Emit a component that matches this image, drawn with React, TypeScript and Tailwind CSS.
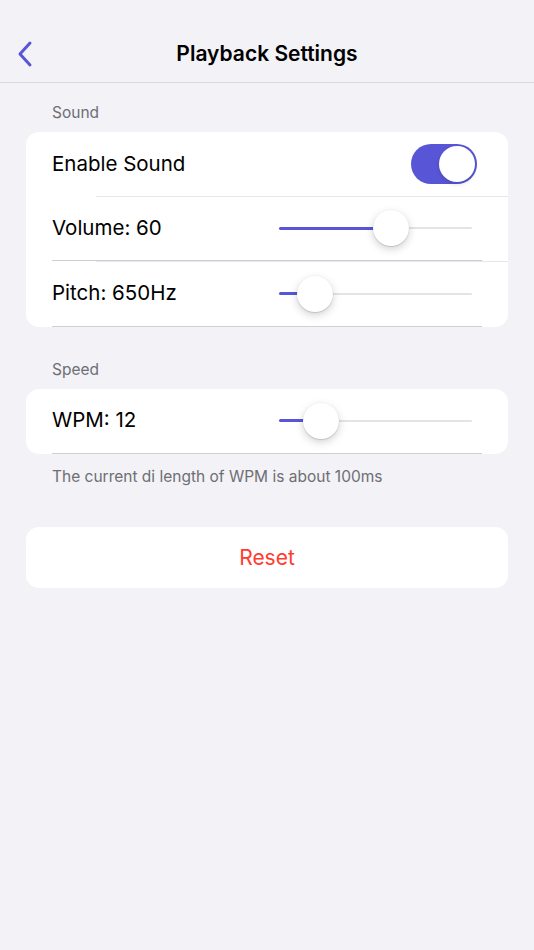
import React from "react";

const font = { fontFamily: "Inter, 'Noto Sans', sans-serif" };

function Slider({ pct }: { pct: number }) {
  const center = 18 + 157 * pct;
  return (
    <div className="relative w-[193px] h-[40px] ml-auto mr-[36px] flex items-center">
      <div className="w-full h-[2px] rounded-full bg-[#e3e3e8] flex">
        <div className="h-[3px] -mt-[0.5px] rounded-full bg-[#5856d6]" style={{ width: center }} />
      </div>
      <div
        className="absolute top-[2px] w-[36px] h-[36px] rounded-full bg-white shadow-[0_3px_8px_rgba(0,0,0,0.18),0_1px_1px_rgba(0,0,0,0.12),0_0_0_0.5px_rgba(0,0,0,0.04)]"
        style={{ left: center - 18 }}
      />
    </div>
  );
}

function SliderRow({ label, pct, lightSep, h }: { label: string; pct: number; lightSep?: boolean; h: string }) {
  return (
    <div className="flex flex-col">
      <div className={`flex items-center ${h}`}>
        <span className="pl-[26px] text-[20.5px] text-black">{label}</span>
        <Slider pct={pct} />
      </div>
      <div className="mx-[26px] h-[1.5px] bg-[#cfced6]" />
      {lightSep && <div className="ml-[70px] h-px bg-[#e6e6eb]" />}
    </div>
  );
}

export default function App() {
  return (
    <div className="min-h-[950px] w-full bg-[#f2f2f7]" style={font}>
      <div className="h-[83px] pt-[26px] border-b border-[#d8d8dd] flex items-center">
        <div className="w-[60px] pl-[16px] flex items-center">
          <svg width="18" height="28" viewBox="0 0 18 28">
            <path d="M14 3 L4 14 L14 25" fill="none" stroke="#5856d6" strokeWidth="3" strokeLinecap="round" strokeLinejoin="round" />
          </svg>
        </div>
        <h1 className="flex-1 text-center text-[21px] font-semibold text-black">Playback Settings</h1>
        <div className="w-[60px]" />
      </div>

      <div className="px-[26px] flex flex-col">
        <div className="pl-[26px] pt-[20px] pb-[9px] text-[15.5px] leading-[20px] text-[#6e6e73]">Sound</div>
        <div className="bg-white rounded-[13px] flex flex-col">
          <div className="flex flex-col">
            <div className="h-[64px] flex items-center">
              <span className="pl-[26px] text-[20.5px] text-black">Enable Sound</span>
              <div className="ml-auto mr-[31px] w-[66px] h-[40px] rounded-full bg-[#5856d6] flex items-center justify-end p-[2px]">
                <div className="w-[36px] h-[36px] rounded-full bg-white shadow-[0_2px_4px_rgba(0,0,0,0.15)]" />
              </div>
            </div>
            <div className="ml-[70px] h-px bg-[#e6e6eb]" />
          </div>
          <SliderRow label="Volume: 60" pct={0.6} lightSep h="h-[62.5px]" />
          <SliderRow label="Pitch: 650Hz" pct={0.115} h="h-[63.5px]" />
        </div>

        <div className="pl-[26px] pt-[33px] pb-[9px] text-[15.5px] leading-[20px] text-[#6e6e73]">Speed</div>
        <div className="bg-white rounded-[13px]">
          <SliderRow label="WPM: 12" pct={0.153} h="h-[63.5px]" />
        </div>
        <div className="pl-[26px] pt-[13px] text-[15.5px] leading-[20px] text-[#6e6e73]">
          The current di length of WPM is about 100ms
        </div>

        <div className="mt-[40px] h-[61px] bg-white rounded-[13px] flex items-center justify-center">
          <span className="text-[21px] text-[#ff3b30]">Reset</span>
        </div>
      </div>
    </div>
  );
}
